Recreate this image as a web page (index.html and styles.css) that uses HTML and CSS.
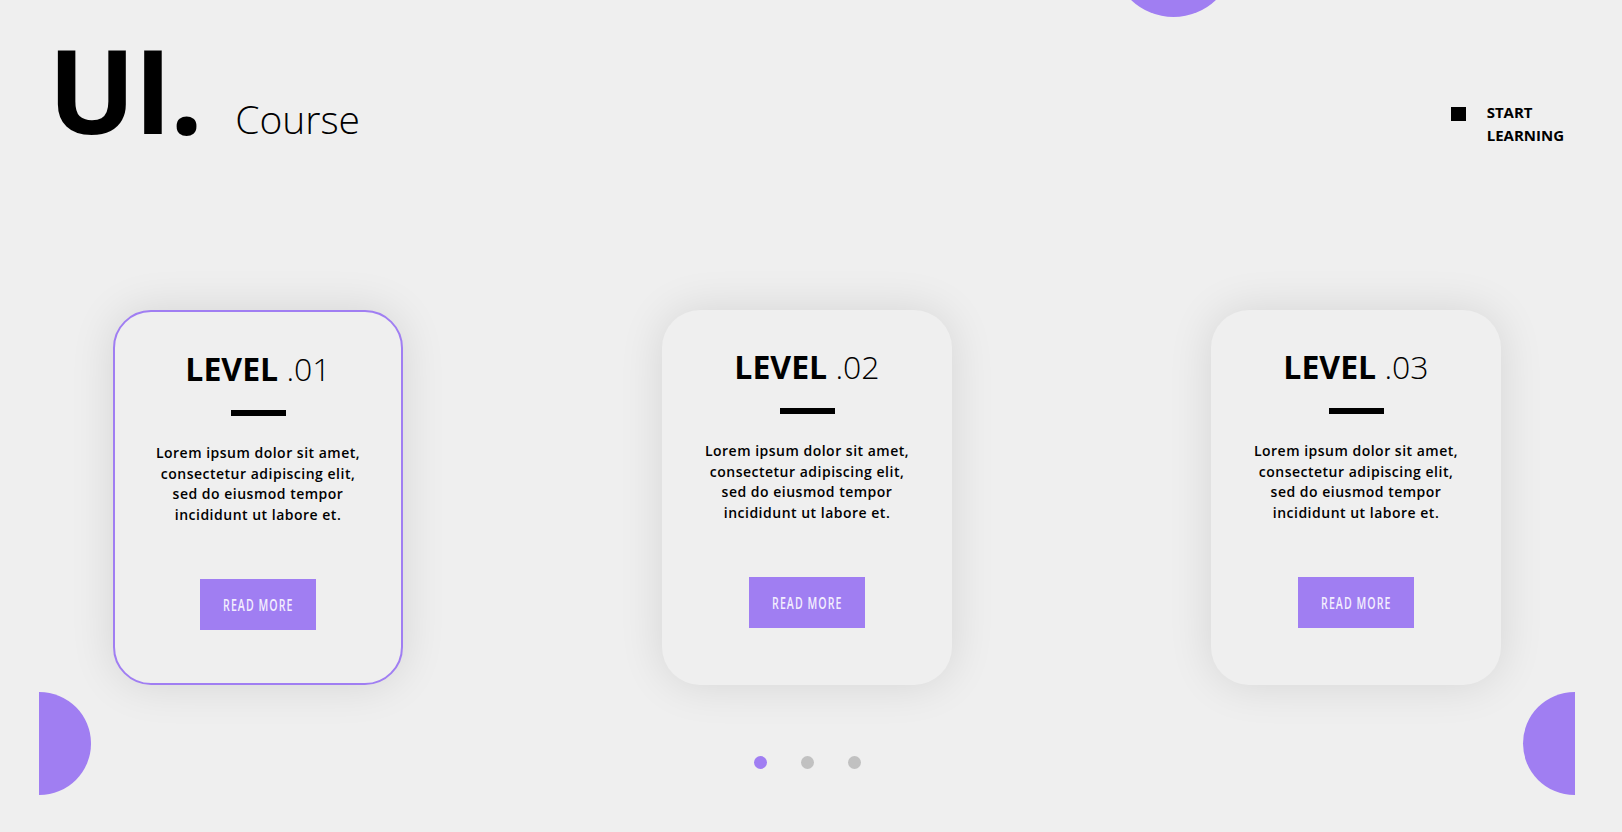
FILE: index.html
```html
<!DOCTYPE html>
<html lang="en">
<head>
<meta charset="utf-8">
<title>UI. Course</title>
<link rel="stylesheet" href="styles.css">
</head>
<body>
<div class="deco deco-top"></div>
<div class="deco deco-left"></div>
<div class="deco deco-right"></div>
<header class="header">
  <div class="logo">
    <span class="logo-main">UI.</span>
    <span class="logo-sub">Course</span>
  </div>
  <a class="nav" href="#">
    <span class="nav-square"></span>
    <span class="nav-text"><span>START</span><span>LEARNING</span></span>
  </a>
</header>
<main class="slider">
  <div class="cards">
    <article class="card card-active">
      <h2 class="card-title"><b>LEVEL</b> <span>.01</span></h2>
      <div class="card-bar"></div>
      <p class="card-text">Lorem ipsum dolor sit amet, consectetur adipiscing elit, sed do eiusmod tempor incididunt ut labore et.</p>
      <a class="card-btn" href="#"><span>READ MORE</span></a>
    </article>
    <article class="card">
      <h2 class="card-title"><b>LEVEL</b> <span>.02</span></h2>
      <div class="card-bar"></div>
      <p class="card-text">Lorem ipsum dolor sit amet, consectetur adipiscing elit, sed do eiusmod tempor incididunt ut labore et.</p>
      <a class="card-btn" href="#"><span>READ MORE</span></a>
    </article>
    <article class="card">
      <h2 class="card-title"><b>LEVEL</b> <span>.03</span></h2>
      <div class="card-bar"></div>
      <p class="card-text">Lorem ipsum dolor sit amet, consectetur adipiscing elit, sed do eiusmod tempor incididunt ut labore et.</p>
      <a class="card-btn" href="#"><span>READ MORE</span></a>
    </article>
  </div>
  <div class="dots">
    <span class="dot dot-active"></span>
    <span class="dot"></span>
    <span class="dot"></span>
  </div>
</main>
</body>
</html>
```
FILE: styles.css
```css
* { box-sizing: border-box; }
html, body { margin: 0; padding: 0; }
body {
  background: #efefef;
  width: 1622px;
  height: 832px;
  overflow: hidden;
  position: relative;
  font-family: "Open Sans", "Noto Sans", sans-serif;
  color: #000;
}
.deco { position: absolute; background: #a07ef2; }
.deco-top {
  left: 1112px; top: -106px;
  width: 123px; height: 123px;
  border-radius: 50%;
}
.deco-left {
  left: 39px; top: 692px;
  width: 52px; height: 103px;
  border-radius: 0 52px 52px 0;
}
.deco-right {
  left: 1523px; top: 692px;
  width: 52px; height: 103px;
  border-radius: 52px 0 0 52px;
}
.header {
  height: 147px;
  display: flex;
  justify-content: space-between;
  align-items: flex-start;
  padding: 31px 58px 0 48px;
}
.logo { display: flex; align-items: baseline; }
.logo-main {
  font-size: 116px;
  line-height: 116px;
  font-weight: 700;
  letter-spacing: -2px;
}
.logo-sub {
  font-size: 39px;
  font-weight: 300;
  margin-left: 34px;
}
.nav {
  display: flex;
  align-items: flex-start;
  gap: 21px;
  margin-top: 70px;
  color: #000;
  text-decoration: none;
}
.nav-square {
  width: 15px; height: 14px;
  background: #000;
  margin-top: 6px;
}
.nav-text {
  display: flex;
  flex-direction: column;
  font-size: 15px;
  font-weight: 700;
  line-height: 23px;
}
.slider { padding-top: 163px; }
.cards {
  display: flex;
  gap: 259px;
  padding-left: 113px;
}
.card {
  width: 290px;
  height: 375px;
  border-radius: 38px;
  background: #efefef;
  box-shadow: 0 0 45px rgba(0, 0, 0, 0.11);
  display: flex;
  flex-direction: column;
  align-items: center;
  padding: 37px 40px 0;
  text-align: center;
}
.card-active {
  border: 2px solid #a07ef2;
}
.card-title {
  margin: 0;
  font-size: 32px;
  line-height: 40px;
  font-weight: 400;
}
.card-title b { font-weight: 700; }
.card-title span { font-weight: 300; }
.card-bar {
  width: 55px;
  height: 6px;
  background: #000;
  margin-top: 21px;
}
.card-text {
  width: 210px;
  margin: 27px 0 0;
  font-size: 14px;
  line-height: 20.5px;
  font-weight: 600;
  letter-spacing: 0.5px;
}
.card-btn {
  margin-top: 54px;
  width: 116px;
  height: 51px;
  background: #a07ef2;
  color: #f3eefe;
  text-decoration: none;
  display: flex;
  align-items: center;
  justify-content: center;
  font-family: "Open Sans", "Noto Sans", sans-serif;
  font-size: 16px;
  font-weight: 600;
  letter-spacing: 1.6px;
}
.card-btn span {
  display: inline-block;
  transform: scaleX(0.66);
  white-space: nowrap;
}
.dots {
  display: flex;
  justify-content: center;
  gap: 34px;
  margin-top: 71px;
  padding-right: 8px;
}
.dot {
  width: 13px; height: 13px;
  border-radius: 50%;
  background: #c1c1c1;
}
.dot-active { background: #a07ef2; }
```
